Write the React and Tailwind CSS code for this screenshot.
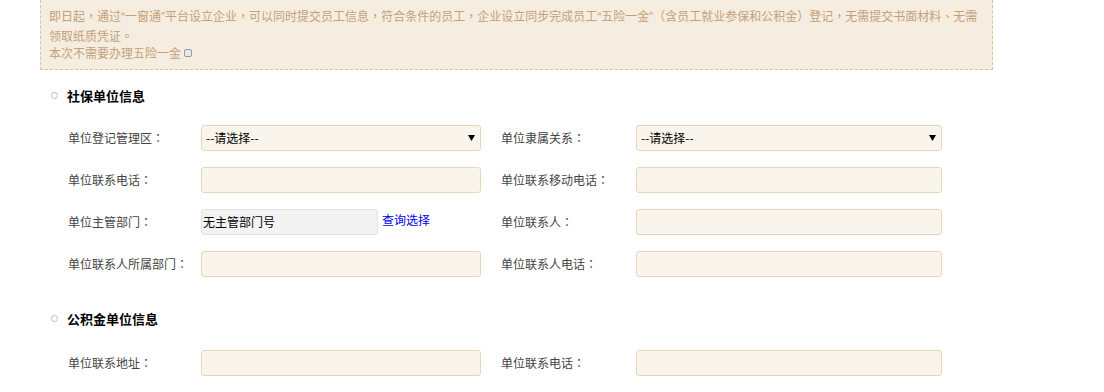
import React from "react";

const font = { fontFamily: '"Noto Sans CJK SC", "Noto Sans", sans-serif' };

function T({ children }) {
  const s = String(children);
  const parts = [];
  let buf = "";
  for (let i = 0; i < s.length; i++) {
    const c = s[i];
    if (c === "：" || c === "，" || c === "、" || c === "。") {
      if (buf) parts.push(buf);
      buf = "";
      parts.push(
        <span key={i} className="font-['Noto_Sans_CJK_TC']">
          {c}
        </span>
      );
    } else if (c === "“" || c === "”") {
      if (buf) parts.push(buf);
      buf = "";
      parts.push(
        <span key={i} className="font-['Liberation_Sans']">
          {c}
        </span>
      );
    } else {
      buf += c;
    }
  }
  if (buf) parts.push(buf);
  return <>{parts}</>;
}

function Heading({ children }) {
  return (
    <div className="flex items-center h-[20px] pl-[11px]">
      <span className="w-[7px] h-[7px] rounded-full border border-[#d6b99b] bg-white"></span>
      <span className="ml-[9px] text-[13px] font-bold text-black leading-[20px]">{children}</span>
    </div>
  );
}

function Label({ children, w }) {
  return (
    <div className={`${w} text-[12px] text-[#444] leading-[26px] whitespace-nowrap`}>
      {children ? <T>{children}</T> : null}
    </div>
  );
}

function Input({ w }) {
  return <div className={`${w} h-[26px] rounded-[3px] border border-[#e8d7b7] bg-[#faf5ec]`}></div>;
}

function Select({ w }) {
  return (
    <div className={`${w} h-[26px] rounded-[3px] border border-[#e8d7b7] bg-[#faf5ec] flex items-center justify-between pl-[4px] pr-[5px]`}>
      <span className="text-[12px] text-black">--请选择--</span>
      <svg width="7" height="7" viewBox="0 0 7 7" className="mt-[-1px]">
        <path d="M0 1 L7 1 L3.5 7 Z" fill="#000" />
      </svg>
    </div>
  );
}

function Row({ left, right }) {
  return (
    <div className="flex items-center h-[26px] pl-[28px]">
      <Label w="w-[133px]">{left.label}</Label>
      <div className="w-[300px] flex items-center">{left.field}</div>
      <Label w="w-[135px]">{right.label}</Label>
      {right.field}
    </div>
  );
}

export default function App() {
  return (
    <div className="w-[1104px] h-[392px] overflow-hidden bg-white [text-spacing-trim:space-all]" style={font}>
      <div className="ml-[40px] w-[953px]">
        <div className="border border-t-0 border-dashed border-[#d8c3a2] bg-[#f5eee0] pl-[8px] pt-[7px] pb-[7px] text-[12px] leading-[17.5px] text-[#c59f79]">
          <div className="whitespace-nowrap">
            <T>即日起，通过“一窗通”平台设立企业，可以同时提交员工信息，符合条件的员工，企业设立同步完成员工“五险一金”</T>
            （含员工就业参保和公积金）<T>登记，无需提交书面材料、无需</T>
          </div>
          <div>
            <T>领取纸质凭证。</T>
          </div>
          <div className="flex items-center">
            本次不需要办理五险一金
            <span className="ml-[3px] inline-block w-[8px] h-[8px] rounded-[2px] border border-[#999] bg-[#e8e8e8]"></span>
          </div>
        </div>

        <div className="mt-[16px]">
          <Heading>社保单位信息</Heading>
        </div>
        <div className="mt-[19px] flex flex-col gap-[16px]">
          <Row
            left={{ label: "单位登记管理区：", field: <Select w="w-[280px]" /> }}
            right={{ label: "单位隶属关系：", field: <Select w="w-[306px]" /> }}
          />
          <Row
            left={{ label: "单位联系电话：", field: <Input w="w-[280px]" /> }}
            right={{ label: "单位联系移动电话：", field: <Input w="w-[306px]" /> }}
          />
          <Row
            left={{
              label: "单位主管部门：",
              field: (
                <>
                  <div className="w-[177px] h-[26px] rounded-[3px] border border-[#e2e2e2] bg-[#f3f3f3] flex items-center pl-[1px] text-[12px] text-black">
                    无主管部门号
                  </div>
                  <span className="ml-[4px] -mt-[4px] text-[12px] text-[#0000ee]">查询选择</span>
                </>
              ),
            }}
            right={{ label: "单位联系人：", field: <Input w="w-[306px]" /> }}
          />
          <Row
            left={{ label: "单位联系人所属部门：", field: <Input w="w-[280px]" /> }}
            right={{ label: "单位联系人电话：", field: <Input w="w-[306px]" /> }}
          />
        </div>

        <div className="mt-[32px]">
          <Heading>公积金单位信息</Heading>
        </div>
        <div className="mt-[21px] flex flex-col gap-[16px]">
          <Row
            left={{ label: "单位联系地址：", field: <Input w="w-[280px]" /> }}
            right={{ label: "单位联系电话：", field: <Input w="w-[306px]" /> }}
          />
          <Row
            left={{ label: "", field: <Input w="w-[280px]" /> }}
            right={{ label: "", field: <Input w="w-[306px]" /> }}
          />
        </div>
      </div>
    </div>
  );
}
